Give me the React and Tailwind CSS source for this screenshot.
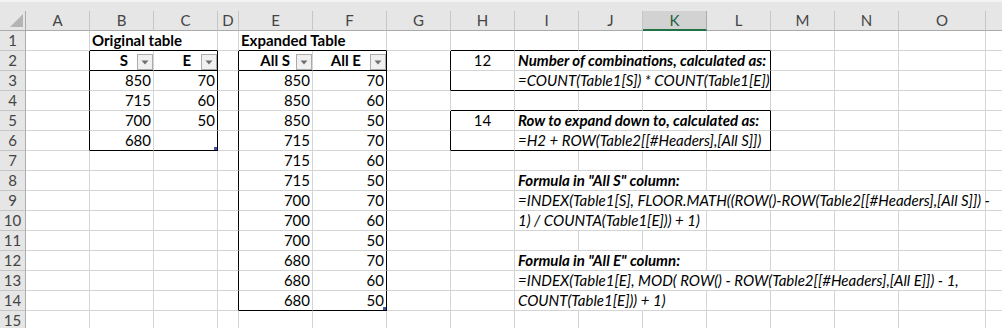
import React from "react";

// border colour classes
const GR = "border-r-[#d4d4d4]";
const KR = "border-r-black";
const GB = "border-b-[#d4d4d4]";
const KB = "border-b-black";

const COLS = [
  { k: "A", w: "w-[64px]" },
  { k: "B", w: "w-[64px]" },
  { k: "C", w: "w-[64px]" },
  { k: "D", w: "w-[21px]" },
  { k: "E", w: "w-[74px]" },
  { k: "F", w: "w-[74px]" },
  { k: "G", w: "w-[64px]" },
  { k: "H", w: "w-[64px]" },
  { k: "I", w: "w-[64px]" },
  { k: "J", w: "w-[64px]" },
  { k: "K", w: "w-[64px]" },
  { k: "L", w: "w-[64px]" },
  { k: "M", w: "w-[64px]" },
  { k: "N", w: "w-[64px]" },
  { k: "O", w: "w-[87px]" },
];

const Cell = ({ w = "w-[64px]", r = GR, b = GB, className = "", children }) => (
  <div
    className={`${w} h-[20px] shrink-0 border-r border-b ${r} ${b} relative flex items-center whitespace-nowrap leading-[19px] ${className}`}
  >
    {children}
  </div>
);

const Num = ({ w, r, b, v, handle }) => (
  <Cell w={w} r={r} b={b} className="justify-end pr-[2px]">
    {v}
    {handle && <span className="absolute right-0 bottom-0 w-[3px] h-[3px] bg-[#4453a8]" />}
  </Cell>
);

const FilterBtn = () => (
  <span className="self-end w-[16px] h-[16px] border border-[#ababab] bg-[#f0f0f0] flex items-center justify-center">
    <svg width="8" height="5" viewBox="0 0 8 5">
      <polygon points="0.5,0.5 7.5,0.5 4,4.5" fill="#707070" />
    </svg>
  </span>
);

const HeadCell = ({ w, r, label, mr }) => (
  <Cell w={w} r={r} b={KB} className="justify-end">
    <span className={`font-bold ${mr}`}>{label}</span>
    <FilterBtn />
  </Cell>
);

const RowHead = ({ n }) => (
  <div className="w-[26px] h-[20px] shrink-0 bg-[#e6e6e6] border-r border-b border-r-[#ababab] border-b-[#c6c6c6] flex items-center justify-center leading-[19px] text-[#444]">
    {n}
  </div>
);

const Rest = () => <div className="flex-1 min-w-0 h-[20px] border-b border-b-[#d4d4d4]" />;

// columns G..O for the lower rows, with an optional overflowing text in I
const Right = ({ span, text, bold }) => {
  const t = (
    <span className={`pl-[3px] italic ${bold ? "font-bold" : ""}`}>{text}</span>
  );
  return (
    <>
      <Cell />
      <Cell />
      {span === "IK" && (
        <>
          <Cell w="w-[192px]">{t}</Cell>
          <Cell />
          <Cell />
          <Cell />
          <Cell w="w-[87px]" />
        </>
      )}
      {span === "IO" && <Cell w="w-[471px]">{t}</Cell>}
      {!span && (
        <>
          <Cell />
          <Cell />
          <Cell />
          <Cell />
          <Cell />
          <Cell />
          <Cell w="w-[87px]" />
        </>
      )}
      <Rest />
    </>
  );
};

const Lower = ({ n, e, f, last, plain, span, text, bold }) => (
  <div className="flex">
    <RowHead n={n} />
    <Cell />
    <Cell />
    <Cell />
    <Cell w="w-[21px]" r={plain ? GR : KR} />
    <Num w="w-[74px]" v={e} b={last ? KB : GB} />
    <Num w="w-[74px]" v={f} r={plain ? GR : KR} b={last ? KB : GB} handle={last} />
    <Right span={span} text={text} bold={bold} />
  </div>
);

export default function App() {
  return (
    <div className="w-[1002px] h-[328px] overflow-hidden bg-white font-['Lato',sans-serif] text-[15px] text-black">
      <div className="h-[2px] bg-[#f3f3f3]" />
      {/* column headers */}
      <div className="flex h-[29px] bg-[#e6e6e6]">
        <div className="w-[26px] h-[29px] shrink-0 flex items-end">
          <div className="w-full h-[20px] border-r border-b border-r-[#ababab] border-b-[#ababab]">
            <svg width="25" height="19" viewBox="0 0 25 19">
              <polygon points="23,3 23,16 10,16" fill="#b4b4b4" />
            </svg>
          </div>
        </div>
        {COLS.map((c) => (
          <div key={c.k} className={`${c.w} h-[29px] shrink-0 flex items-end`}>
            {c.k === "K" ? (
              <div className="w-full h-[20px] border-r border-b-2 border-r-[#ababab] border-b-[#217346] bg-[#d2d2d2] flex items-center justify-center leading-[18px] text-[#1f5f3b]">
                {c.k}
              </div>
            ) : (
              <div className="w-full h-[20px] border-r border-b border-r-[#c6c6c6] border-b-[#ababab] flex items-center justify-center leading-[19px] text-[#444]">
                {c.k}
              </div>
            )}
          </div>
        ))}
        <div className="flex-1 min-w-0 h-[29px] flex items-end">
          <div className="w-full h-[20px] border-b border-b-[#ababab]" />
        </div>
      </div>

      {/* row 1 */}
      <div className="flex">
        <RowHead n={1} />
        <Cell />
        <Cell w="w-[128px]" b={KB}>
          <span className="pl-[2px] font-bold">Original table</span>
        </Cell>
        <Cell w="w-[21px]" />
        <Cell w="w-[148px]" b={KB}>
          <span className="pl-[2px] font-bold">Expanded Table</span>
        </Cell>
        <Cell />
        <Cell b={KB} />
        <Cell b={KB} />
        <Cell b={KB} />
        <Cell b={KB} />
        <Cell b={KB} />
        <Cell />
        <Cell />
        <Cell w="w-[87px]" />
        <Rest />
      </div>

      {/* row 2 */}
      <div className="flex">
        <RowHead n={2} />
        <Cell r={KR} />
        <HeadCell w="w-[64px]" label="S" mr="mr-[9px]" />
        <HeadCell w="w-[64px]" r={KR} label="E" mr="mr-[10px]" />
        <Cell w="w-[21px]" r={KR} />
        <HeadCell w="w-[74px]" label="All S" mr="mr-[6px]" />
        <HeadCell w="w-[74px]" r={KR} label="All E" mr="mr-[9px]" />
        <Cell r={KR} />
        <Cell className="justify-center">12</Cell>
        <Cell w="w-[256px]" r={KR}>
          <span className="pl-[3px] italic font-bold">Number of combinations, calculated as:</span>
        </Cell>
        <Cell />
        <Cell />
        <Cell w="w-[87px]" />
        <Rest />
      </div>

      {/* row 3 */}
      <div className="flex">
        <RowHead n={3} />
        <Cell r={KR} />
        <Num v="850" />
        <Num v="70" r={KR} />
        <Cell w="w-[21px]" r={KR} />
        <Num w="w-[74px]" v="850" />
        <Num w="w-[74px]" v="70" r={KR} />
        <Cell r={KR} />
        <Cell b={KB} />
        <Cell w="w-[256px]" r={KR} b={KB}>
          <span className="pl-[3px] italic">=COUNT(Table1[S]) * COUNT(Table1[E])</span>
        </Cell>
        <Cell />
        <Cell />
        <Cell w="w-[87px]" />
        <Rest />
      </div>

      {/* row 4 */}
      <div className="flex">
        <RowHead n={4} />
        <Cell r={KR} />
        <Num v="715" />
        <Num v="60" r={KR} />
        <Cell w="w-[21px]" r={KR} />
        <Num w="w-[74px]" v="850" />
        <Num w="w-[74px]" v="60" r={KR} />
        <Cell />
        <Cell b={KB} />
        <Cell b={KB} />
        <Cell b={KB} />
        <Cell b={KB} />
        <Cell b={KB} />
        <Cell />
        <Cell />
        <Cell w="w-[87px]" />
        <Rest />
      </div>

      {/* row 5 */}
      <div className="flex">
        <RowHead n={5} />
        <Cell r={KR} />
        <Num v="700" />
        <Num v="50" r={KR} />
        <Cell w="w-[21px]" r={KR} />
        <Num w="w-[74px]" v="850" />
        <Num w="w-[74px]" v="50" r={KR} />
        <Cell r={KR} />
        <Cell className="justify-center">14</Cell>
        <Cell w="w-[256px]" r={KR}>
          <span className="pl-[3px] italic font-bold">Row to expand down to, calculated as:</span>
        </Cell>
        <Cell />
        <Cell />
        <Cell w="w-[87px]" />
        <Rest />
      </div>

      {/* row 6 */}
      <div className="flex">
        <RowHead n={6} />
        <Cell r={KR} />
        <Num v="680" b={KB} />
        <Num v="" r={KR} b={KB} handle />
        <Cell w="w-[21px]" r={KR} />
        <Num w="w-[74px]" v="715" />
        <Num w="w-[74px]" v="70" r={KR} />
        <Cell r={KR} />
        <Cell b={KB} />
        <Cell w="w-[256px]" r={KR} b={KB}>
          <span className="pl-[3px] italic">=H2 + ROW(Table2[[#Headers],[All S]])</span>
        </Cell>
        <Cell />
        <Cell />
        <Cell w="w-[87px]" />
        <Rest />
      </div>

      <Lower n={7} e="715" f="60" />
      <Lower n={8} e="715" f="50" span="IK" bold text={'Formula in "All S" column:'} />
      <Lower
        n={9}
        e="700"
        f="70"
        span="IO"
        text="=INDEX(Table1[S], FLOOR.MATH((ROW()-ROW(Table2[[#Headers],[All S]]) -"
      />
      <Lower n={10} e="700" f="60" span="IK" text="1) / COUNTA(Table1[E])) + 1)" />
      <Lower n={11} e="700" f="50" />
      <Lower n={12} e="680" f="70" span="IK" bold text={'Formula in "All E" column:'} />
      <Lower
        n={13}
        e="680"
        f="60"
        span="IO"
        text="=INDEX(Table1[E], MOD( ROW() - ROW(Table2[[#Headers],[All E]]) - 1,"
      />
      <Lower n={14} e="680" f="50" last span="IK" text="COUNT(Table1[E])) + 1)" />
      <Lower n={15} plain />
    </div>
  );
}
